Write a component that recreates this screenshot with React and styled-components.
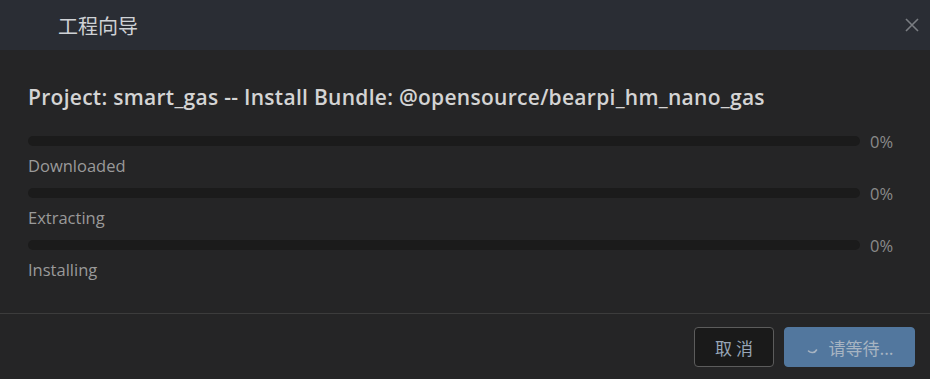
import React from 'react'
import styled, { createGlobalStyle } from 'styled-components'

const GlobalStyle = createGlobalStyle`
  *, *::before, *::after {
    box-sizing: border-box;
  }
  html, body {
    margin: 0;
    padding: 0;
    background: #252526;
  }
  body {
    font-family: "Open Sans", "Noto Sans CJK SC", sans-serif;
  }
`

const Dialog = styled.div`
  width: 930px;
  height: 379px;
  display: flex;
  flex-direction: column;
  background: #252526;
`

const Header = styled.div`
  height: 50px;
  flex: none;
  display: flex;
  align-items: center;
  justify-content: space-between;
  padding: 0 6px 0 58px;
  background: #2a2d34;
`

const HeaderTitle = styled.span`
  font-family: "Noto Sans CJK SC", sans-serif;
  font-size: 20px;
  color: #cfd2d6;
`

const CloseBtn = styled.button`
  width: 24px;
  height: 24px;
  padding: 0;
  border: none;
  background: transparent;
  display: flex;
  align-items: center;
  justify-content: center;
`

const Body = styled.div`
  flex: 1;
  padding: 33px 0 0 28px;
`

const Title = styled.h1`
  margin: 0 0 23px;
  font-size: 21px;
  letter-spacing: 0.28px;
  font-weight: 600;
  color: #d4d4d4;
  line-height: 28px;
`

const Row = styled.div`
  margin-bottom: 4px;
`

const BarLine = styled.div`
  display: flex;
  align-items: center;
  gap: 10px;
  height: 14px;
`

const Track = styled.div`
  width: 832px;
  height: 10px;
  border-radius: 5px;
  background: #1b1b1b;
  overflow: hidden;
`

const Fill = styled.div`
  height: 100%;
  background: #4f7499;
`

const Percent = styled.span`
  font-size: 16.5px;
  color: #8a8a8a;
`

const Label = styled.div`
  font-size: 16.5px;
  color: #9a9a9a;
  line-height: 35px;
  height: 34px;
`

const Footer = styled.div`
  flex: none;
  height: 66px;
  border-top: 1px solid #3c3c3c;
  display: flex;
  align-items: flex-start;
  justify-content: flex-end;
  gap: 10px;
  padding: 13px 15px 0 0;
`

const Button = styled.button`
  height: 40px;
  padding: 0;
  border-radius: 4px;
  font-family: "Noto Sans CJK SC", sans-serif;
  font-size: 17px;
  display: flex;
  align-items: center;
  justify-content: center;
  gap: 7px;
  width: ${p => p.$width}px;
  background: ${p => (p.$primary ? '#52779e' : '#1a1a1a')};
  border: 1px solid ${p => (p.$primary ? '#52779e' : '#5c5c5c')};
  color: ${p => (p.$primary ? '#a7b4c2' : '#97a6b8')};
`

const Spinner = styled.svg`
  width: 16px;
  height: 16px;
  margin-top: 2px;
`

const steps = [
  { label: 'Downloaded', value: 0 },
  { label: 'Extracting', value: 0 },
  { label: 'Installing', value: 0 },
]

export default function App() {
  return (
    <>
      <GlobalStyle />
      <Dialog>
        <Header>
          <HeaderTitle>工程向导</HeaderTitle>
          <CloseBtn>
            <svg width="14" height="14" viewBox="0 0 14 14">
              <path d="M1 1L13 13M13 1L1 13" stroke="#7a7d82" strokeWidth="1.6" />
            </svg>
          </CloseBtn>
        </Header>
        <Body>
          <Title>Project: smart_gas -- Install Bundle: @opensource/bearpi_hm_nano_gas</Title>
          {steps.map(s => (
            <Row key={s.label}>
              <BarLine>
                <Track>
                  <Fill style={{ width: `${s.value}%` }} />
                </Track>
                <Percent>{s.value}%</Percent>
              </BarLine>
              <Label>{s.label}</Label>
            </Row>
          ))}
        </Body>
        <Footer>
          <Button $width={80}>取 消</Button>
          <Button $width={131} $primary>
            <Spinner viewBox="0 0 16 16">
              <path d="M3.5 11 A5 5 0 0 0 11.5 10" fill="none" stroke="#a7b4c2" strokeWidth="1.6" strokeLinecap="round" />
            </Spinner>
            请等待...
          </Button>
        </Footer>
      </Dialog>
    </>
  )
}
